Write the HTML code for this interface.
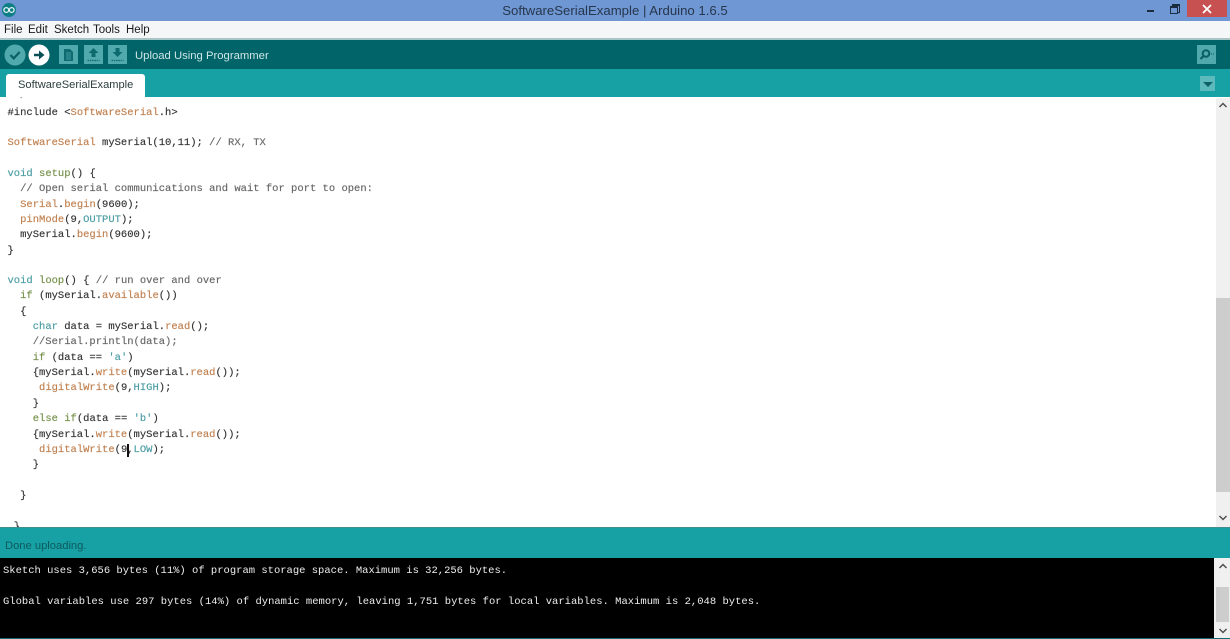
<!DOCTYPE html>
<html><head><meta charset="utf-8">
<style>
html,body{margin:0;padding:0;background:#fff;}
#p{position:relative;width:1230px;height:639px;overflow:hidden;background:#fff;font-family:"Liberation Sans",sans-serif;}
.a{position:absolute;}
.m{position:absolute;top:23px;font-size:11.5px;line-height:14px;color:#1a1a1a;}
.l{position:absolute;white-space:pre;font-family:"Liberation Mono",monospace;font-size:10.5px;line-height:14px;color:#333;left:7.5px;-webkit-text-stroke:0.15px currentColor;}
.o{color:#c08050;}.t{color:#4a9da3;}.g{color:#75904a;}.c{color:#666;}
.k{position:absolute;white-space:pre;font-family:"Liberation Mono",monospace;font-size:10.5px;line-height:14px;color:#eee;left:3px;}
</style></head><body><div id="p">
<div class="a" style="left:0;top:0;width:1230px;height:21px;background:#6e97d3;"></div>
<svg class="a" style="left:0;top:0" width="20" height="20" viewBox="0 0 20 20"><circle cx="9" cy="10" r="7" fill="#0e7f86"/><circle cx="6.3" cy="10" r="2.4" fill="none" stroke="#e6f4f4" stroke-width="1.3"/><circle cx="11.7" cy="10" r="2.4" fill="none" stroke="#e6f4f4" stroke-width="1.3"/></svg>
<div class="a" style="left:490px;top:2px;width:250px;text-align:center;font-size:13.2px;line-height:17px;color:#27364d;">SoftwareSerialExample | Arduino 1.6.5</div>
<div class="a" style="left:1147px;top:10px;width:7px;height:2px;background:#1c2c40;"></div>
<div class="a" style="left:1172px;top:4px;width:6px;height:6px;border:1px solid #1c2c40;border-top-width:2px;"></div>
<div class="a" style="left:1170px;top:6px;width:6px;height:5px;border:1px solid #1c2c40;border-top-width:2px;background:#6e97d3;"></div>
<div class="a" style="left:1187px;top:0;width:40px;height:17px;background:#c75050;"></div>
<svg class="a" style="left:1201px;top:3px" width="12" height="12"><path d="M2 2L10 10M10 2L2 10" stroke="#fff" stroke-width="1.8"/></svg>

<div class="a" style="left:0;top:21px;width:1230px;height:18px;background:#f5f6f7;"></div>
<div class="a" style="left:0;top:38px;width:1230px;height:2px;background:#a9c4c4;"></div>
<div class="m" style="left:4px;">File</div><div class="m" style="left:28px;">Edit</div><div class="m" style="left:54px;">Sketch</div><div class="m" style="left:93px;">Tools</div><div class="m" style="left:126px;">Help</div>

<div class="a" style="left:0;top:40px;width:1230px;height:29px;background:#006468;"></div>
<svg class="a" style="left:0;top:40px" width="140" height="29" viewBox="0 0 140 29">
<circle cx="15" cy="15" r="10.5" fill="#4fa9ad"/><path d="M10.5 15l3.2 3.4 6-6.4" fill="none" stroke="#0a5f63" stroke-width="2.2"/>
<circle cx="39" cy="15" r="10.5" fill="#fff"/><path d="M34 13.8h5v-3.3l5.5 4.5-5.5 4.5v-3.3h-5z" fill="#0a4f53"/>
<rect x="59" y="5" width="19" height="19" fill="#4fa9ad"/><path d="M64 9h6l3 3v9h-9z" fill="#0d6a6e"/><path d="M66 13h5M66 15h5M66 17h5M66 19h5" stroke="#4fa9ad" stroke-width=".8"/>
<rect x="84" y="5" width="19" height="19" fill="#4fa9ad"/><path d="M93.500 8l5 5h-3v4h-4v-4h-3z" fill="#0d6a6e"/><path d="M87.500 20.500h12" stroke="#0d6a6e" stroke-width="1.200" stroke-dasharray="1.500 .8"/>
<rect x="108" y="5" width="19" height="19" fill="#4fa9ad"/><path d="M115.500 8h4v4h3l-5 5-5-5h3z" fill="#0d6a6e"/><path d="M111.500 20.500h12" stroke="#0d6a6e" stroke-width="1.200" stroke-dasharray="1.500 .8"/>
</svg>
<div class="a" style="left:135px;top:49px;font-size:11.3px;line-height:15px;color:#cfe6e6;">Upload Using Programmer</div>
<svg class="a" style="left:1197px;top:45px" width="19" height="19"><rect width="19" height="19" fill="#4fa9ad"/><circle cx="9" cy="8.500" r="3.300" fill="none" stroke="#0a5f63" stroke-width="2"/><path d="M6.500 11l-3 3" stroke="#0a5f63" stroke-width="2.200"/><path d="M14 9h3" stroke="#0a5f63" stroke-dasharray="1 1"/></svg>

<div class="a" style="left:0;top:69px;width:1230px;height:28px;background:#17a1a5;"></div>
<div class="a" style="left:6px;top:74px;width:139px;height:23px;background:#fff;border-radius:3px 3px 0 0;"></div>
<div class="a" style="left:18px;top:78px;font-size:11.1px;line-height:15px;color:#2c3c3c;">SoftwareSerialExample</div>
<div class="a" style="left:1200px;top:76px;width:15px;height:15px;background:#5cb9bc;"></div>
<div class="a" style="left:1203px;top:82px;width:0;height:0;border-left:5px solid transparent;border-right:5px solid transparent;border-top:5px solid #0d5f68;"></div>

<div class="a" style="left:1216px;top:98px;width:14px;height:429px;background:#f0f0f0;"></div>
<div class="a" style="left:1216px;top:298px;width:14px;height:194px;background:#cdcdcd;"></div>
<svg class="a" style="left:1216px;top:98px" width="14" height="14"><path d="M3.500 9l3.500-3.500 3.500 3.500" fill="none" stroke="#505050" stroke-width="1.500"/></svg>
<svg class="a" style="left:1216px;top:511px" width="14" height="14"><path d="M3.500 5l3.500 3.500 3.500-3.500" fill="none" stroke="#505050" stroke-width="1.500"/></svg>

<div class="a" style="left:0;top:97px;width:1216px;height:430px;overflow:hidden;">
<div class="l c" style="top:-8px;left:20px;font-size:9px;">/</div>
<div class="l" style="top:9px">#include &lt;<span class="o">SoftwareSerial</span>.h&gt;</div>
<div class="l" style="top:39px"><span class="o">SoftwareSerial</span> mySerial(10,11); <span class="c">// RX, TX</span></div>
<div class="l" style="top:70px"><span class="t">void</span> <span class="g">setup</span>() {</div>
<div class="l" style="top:85px"><span class="c">  // Open serial communications and wait for port to open:</span></div>
<div class="l" style="top:101px">  <span class="o">Serial</span>.<span class="o">begin</span>(9600);</div>
<div class="l" style="top:116px">  <span class="o">pinMode</span>(9,<span class="t">OUTPUT</span>);</div>
<div class="l" style="top:131px">  mySerial.<span class="o">begin</span>(9600);</div>
<div class="l" style="top:147px">}</div>
<div class="l" style="top:177px"><span class="t">void</span> <span class="g">loop</span>() { <span class="c">// run over and over</span></div>
<div class="l" style="top:192px">  <span class="g">if</span> (mySerial.<span class="o">available</span>())</div>
<div class="l" style="top:208px">  {</div>
<div class="l" style="top:223px">    <span class="t">char</span> data = mySerial.<span class="o">read</span>();</div>
<div class="l" style="top:238px"><span class="c">    //Serial.println(data);</span></div>
<div class="l" style="top:254px">    <span class="g">if</span> (data == <span class="t">'a'</span>)</div>
<div class="l" style="top:269px">    {mySerial.<span class="o">write</span>(mySerial.<span class="o">read</span>());</div>
<div class="l" style="top:284px">     <span class="o">digitalWrite</span>(9,<span class="t">HIGH</span>);</div>
<div class="l" style="top:300px">    }</div>
<div class="l" style="top:315px">    <span class="g">else</span> <span class="g">if</span>(data == <span class="t">'b'</span>)</div>
<div class="l" style="top:331px">    {mySerial.<span class="o">write</span>(mySerial.<span class="o">read</span>());</div>
<div class="l" style="top:346px">     <span class="o">digitalWrite</span>(9,<span class="t">LOW</span>);</div>
<div class="a" style="left:127px;top:347px;width:2px;height:13px;background:#111;"></div>
<div class="l" style="top:361px">    }</div>
<div class="l" style="top:392px">  }</div>
<div class="l" style="top:423px"> }</div>
</div>

<div class="a" style="left:0;top:527px;width:1230px;height:31px;background:#17a1a5;border-top:1px solid #3f8f90;box-sizing:border-box;"></div>
<div class="a" style="left:5px;top:539px;font-size:11.2px;line-height:14px;color:#0d5a5e;">Done uploading.</div>

<div class="a" style="left:0;top:558px;width:1214px;height:80px;background:#000;"></div>
<div class="a" style="left:0;top:638px;width:1230px;height:1px;background:#0f6d70;"></div>
<div class="k" style="top:564px">Sketch uses 3,656 bytes (11%) of program storage space. Maximum is 32,256 bytes.</div>
<div class="k" style="top:595px;letter-spacing:0.01px;">Global variables use 297 bytes (14%) of dynamic memory, leaving 1,751 bytes for local variables. Maximum is 2,048 bytes.</div>
<div class="a" style="left:1214px;top:558px;width:16px;height:80px;background:#f0f0f0;"></div>
<div class="a" style="left:1216px;top:587px;width:13px;height:35px;background:#cdcdcd;"></div>
<svg class="a" style="left:1216px;top:559px" width="14" height="14"><path d="M3.500 9l3.500-3.500 3.500 3.500" fill="none" stroke="#505050" stroke-width="1.500"/></svg>
<svg class="a" style="left:1216px;top:624px" width="14" height="14"><path d="M3.500 5l3.500 3.500 3.500-3.500" fill="none" stroke="#505050" stroke-width="1.500"/></svg>
</div></body></html>
